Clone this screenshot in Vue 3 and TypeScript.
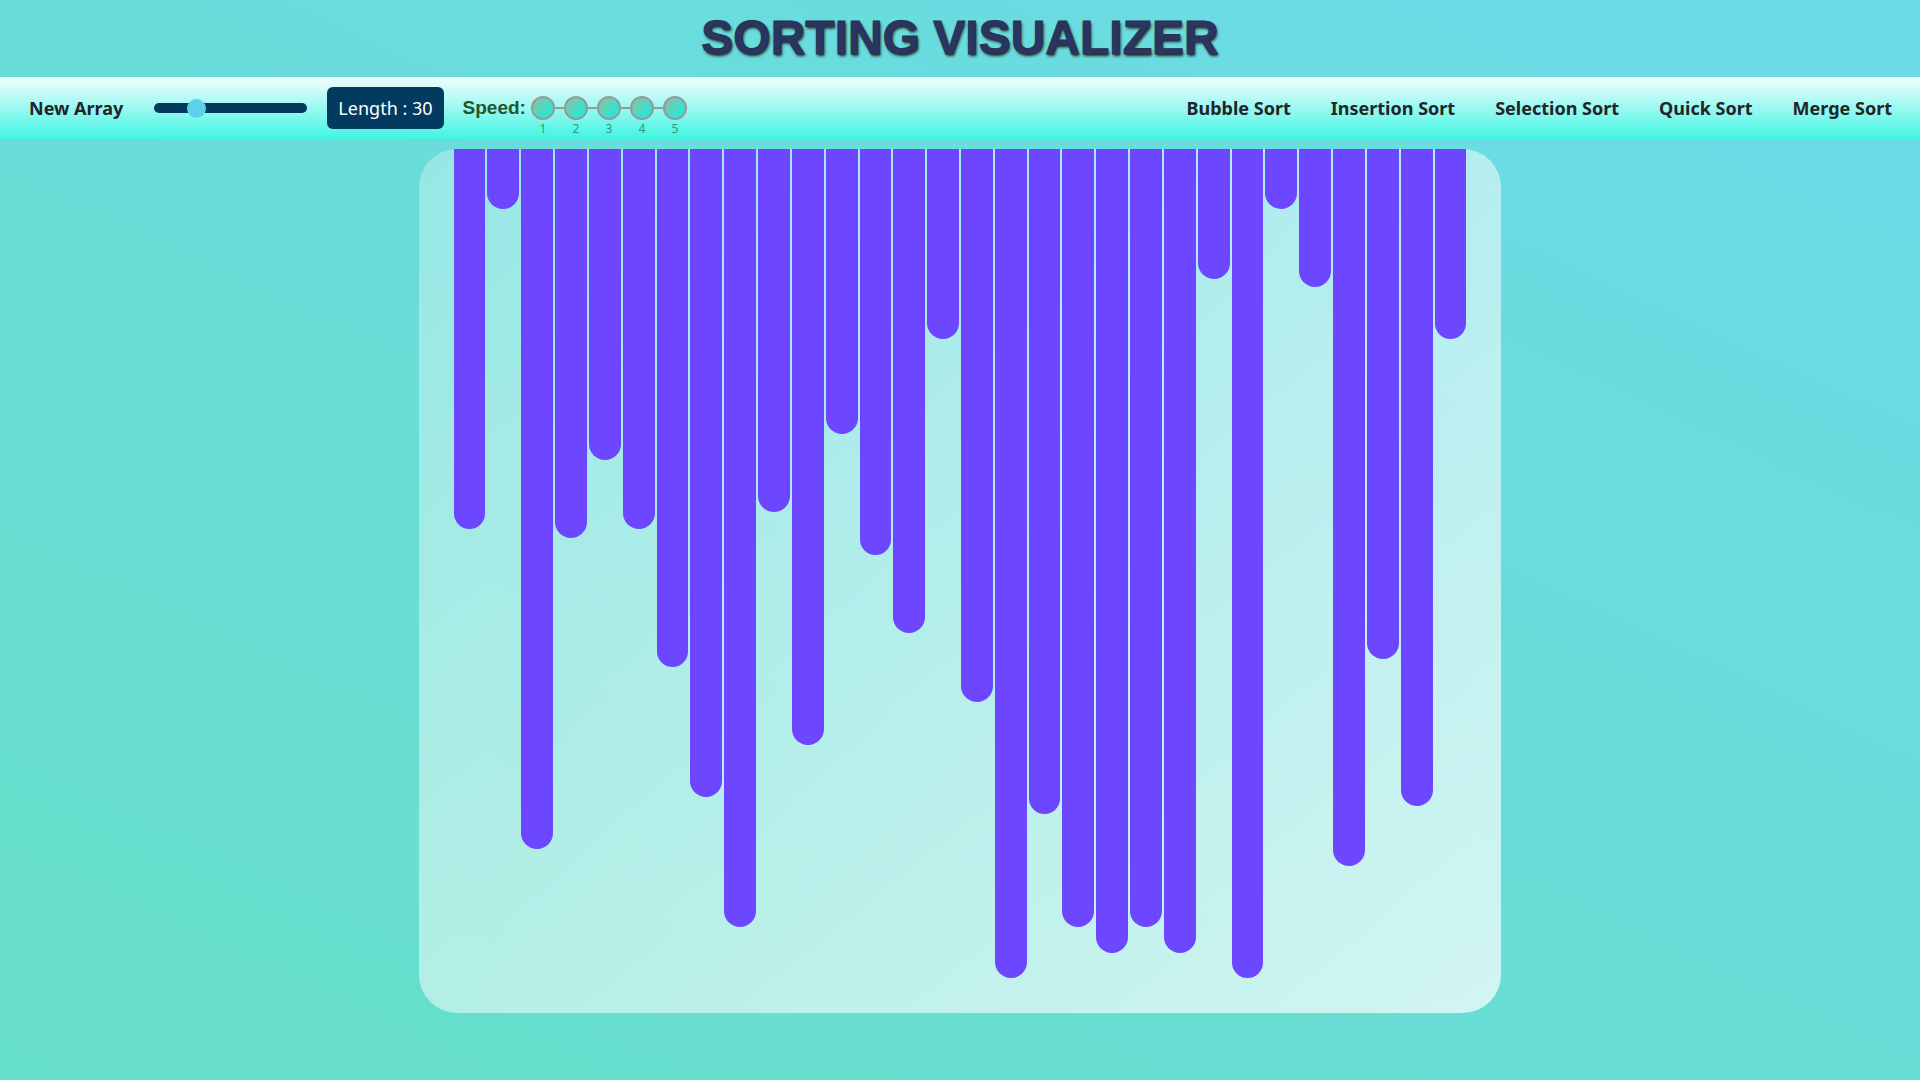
<script setup lang="ts">
import { ref } from 'vue'

const length = ref(30)
const speed = ref<number | null>(null)
const speeds = [1, 2, 3, 4, 5]
const algorithms = ['Bubble Sort', 'Insertion Sort', 'Selection Sort', 'Quick Sort', 'Merge Sort']

const bars = ref<number[]>([
  44, 7, 81, 45, 36, 44, 60, 75, 90, 42, 69, 33, 47, 56, 22,
  64, 96, 77, 90, 93, 90, 93, 15, 96, 7, 16, 83, 59, 76, 22,
])

function newArray() {
  bars.value = Array.from({ length: length.value }, () => Math.floor(Math.random() * 92) + 5)
}
</script>

<template>
  <div class="page">
    <h1 class="title">SORTING VISUALIZER</h1>

    <nav class="toolbar">
      <button type="button" class="action" @click="newArray">New Array</button>
      <input
        v-model.number="length"
        class="slider"
        type="range"
        min="4"
        max="110"
        aria-label="Array length"
        @input="newArray"
      />
      <button type="button" class="length">Length : {{ length }}</button>

      <fieldset class="speed">
        <span class="speed-title">Speed:</span>
        <div class="steps">
          <label v-for="n in speeds" :key="n" class="step">
            <input v-model="speed" type="radio" name="speed" :value="n" />
            <span>{{ n }}</span>
          </label>
        </div>
      </fieldset>

      <div class="algorithms">
        <button v-for="name in algorithms" :key="name" type="button" class="action">{{ name }}</button>
      </div>
    </nav>

    <main class="board">
      <div v-for="(value, i) in bars" :key="i" class="bar" :style="{ height: value + '%' }"></div>
    </main>
  </div>
</template>

<style>
body {
  margin: 0;
}
</style>

<style scoped>
.page {
  display: flex;
  flex-direction: column;
  min-height: 100vh;
  box-sizing: border-box;
  background: linear-gradient(25deg, #66dfc8, #6bdbe8);
  font-family: "Noto Sans", "Open Sans", sans-serif;
}

.title {
  margin: 0;
  height: 77px;
  line-height: 76px;
  text-align: center;
  font-family: "Liberation Sans", Arial, sans-serif;
  font-size: 48px;
  font-weight: 700;
  color: #283566;
  -webkit-text-stroke: 1px #2b3440;
  text-shadow: 1px 2px 3px #222222;
}

.toolbar {
  display: flex;
  align-items: center;
  height: 62px;
  padding: 0 28px 0 29px;
  background: linear-gradient(#f3fdfe, #40f5e3);
}

button {
  margin: 0;
  border: 0;
  background: none;
  font-family: inherit;
  cursor: pointer;
}

.action {
  padding: 0;
  font-size: 18px;
  line-height: 24px;
  font-weight: 700;
  color: #212529;
  white-space: nowrap;
}

.slider {
  appearance: none;
  width: 153px;
  height: 10px;
  margin: 0 20px 0 31px;
  border-radius: 5px;
  background: #033a60;
}

.slider::-webkit-slider-thumb {
  appearance: none;
  width: 19px;
  height: 19px;
  border-radius: 50%;
  background: #5bd3ea;
}

.length {
  height: 42px;
  padding: 0 11px;
  border-radius: 6px;
  background: #033a60;
  color: #ffffff;
  font-size: 18px;
  white-space: nowrap;
}

.speed {
  display: flex;
  align-items: center;
  margin: 0 0 0 19px;
  padding: 0;
  border: 0;
}

.speed-title {
  margin-right: 5px;
  font-family: "Liberation Sans", Arial, sans-serif;
  font-size: 19px;
  font-weight: 700;
  color: #24552a;
}

.steps {
  display: flex;
  gap: 9px;
}

.step {
  position: relative;
  display: flex;
  width: 24px;
}

.step + .step::before {
  content: "";
  position: absolute;
  top: 11px;
  right: 100%;
  width: 9px;
  height: 2px;
  background: #999999;
}

.step input {
  appearance: none;
  width: 24px;
  height: 24px;
  margin: 0;
  border: 2px solid #999999;
  border-radius: 50%;
  background: linear-gradient(135deg, #8fc0a0, #10f0e4);
}

.step span {
  position: absolute;
  top: 100%;
  width: 100%;
  margin-top: 1px;
  text-align: center;
  font-size: 12px;
  line-height: 16px;
  color: #2b9a80;
}

.algorithms {
  display: flex;
  gap: 40px;
  margin-left: auto;
}

.board {
  display: flex;
  align-items: flex-start;
  gap: 2px;
  width: 56.4%;
  height: 80vh;
  margin: 10px auto 0;
  padding: 0 35px;
  box-sizing: border-box;
  border-radius: 38px;
  background: linear-gradient(to bottom right, rgba(255, 255, 255, 0.3), rgba(255, 255, 255, 0.7));
}

.bar {
  flex: 1;
  border-radius: 0 0 20px 20px;
  background: #6c47ff;
}
</style>
